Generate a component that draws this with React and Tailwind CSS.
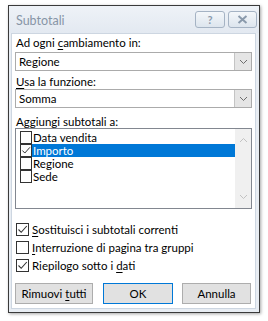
import React from "react";

const font = { fontFamily: 'Lato, "Noto Sans", sans-serif' };

function Chevron({ up = false, color = "#606060" }) {
  return (
    <svg width="9" height="6" viewBox="0 0 9 6" className="block">
      <path
        d={up ? "M1 5 L4.5 1.5 L8 5" : "M1 1 L4.5 4.5 L8 1"}
        fill="none"
        stroke={color}
        strokeWidth="1"
      />
    </svg>
  );
}

function Check({ color = "#333" }) {
  return (
    <svg width="11" height="11" viewBox="0 0 11 11" className="block">
      <path d="M1.5 5.5 L4.2 8.3 L9.8 2" fill="none" stroke={color} strokeWidth="1.1" />
    </svg>
  );
}

function Box({ checked, size = "w-[13px] h-[13px]" }) {
  return (
    <div className={`${size} border border-[#333333] bg-white flex items-center justify-center shrink-0`}>
      {checked && <Check />}
    </div>
  );
}

function Combo({ value }) {
  return (
    <div className="h-[19px] w-[237px] border border-[#ababab] bg-white flex">
      <div className="flex-1 pl-[3px] leading-[17px] text-black">{value}</div>
      <div className="w-[17px] h-full bg-[#e5e5e5] border-l border-[#c4c4c4] flex items-center justify-center">
        <Chevron color="#6d6d6d" />
      </div>
    </div>
  );
}

function U({ children }) {
  return <span className="underline underline-offset-[2px]">{children}</span>;
}

export default function App() {
  const items = [
    { t: "Data vendita", c: false },
    { t: "Importo", c: true, sel: true },
    { t: "Regione", c: false },
    { t: "Sede", c: false },
  ];
  return (
    <div className="w-[268px] h-[321px] bg-white pt-[5px] pl-[8px]" style={font}>
      <div className="w-[252px] h-[308px] border border-[#3a3a3a] bg-[#e8edf3] flex flex-col shadow-[1px_1px_3px_rgba(0,0,0,0.35)]">
        {/* title bar */}
        <div className="h-[27px] flex items-start pl-[7px] pr-[2px] bg-gradient-to-b from-[#eef2f7] to-[#e3e9f1]">
          <div className="text-[12.5px] leading-[16px] mt-[7px] text-[#8795a6]">Subtotali</div>
          <div className="ml-auto flex gap-[3px] mt-[5px]">
            <div className="w-[30px] h-[17px] rounded-[3px] border border-[#a5b3c4] bg-gradient-to-b from-[#f4f7fa] to-[#dde5ee] flex items-center justify-center text-[11px] font-bold leading-none text-[#8a9aac]">
              ?
            </div>
            <div className="w-[29px] h-[17px] rounded-[3px] border border-[#a5b3c4] bg-gradient-to-b from-[#f4f7fa] to-[#dde5ee] flex items-center justify-center">
              <svg width="11" height="9" viewBox="0 0 11 9">
                <path d="M1.5 1 L9.5 8 M9.5 1 L1.5 8" stroke="#8a9aac" strokeWidth="2" fill="none" />
              </svg>
            </div>
          </div>
        </div>
        {/* content */}
        <div className="flex-1 ml-[2px] mb-[3px] mr-[3px] bg-white border border-[#cdd6e1] text-black text-[11.5px] leading-[16px] pl-[3px] flex flex-col">
          <div className="mt-[1px] pl-[1px]">
            Ad ogni <U>c</U>ambiamento in:
          </div>
          <div className="mt-[1px]">
            <Combo value="Regione" />
          </div>
          <div className="mt-[4px] pl-[1px] leading-[14px]">
            <U>U</U>sa la funzione:
          </div>
          <div>
            <Combo value="Somma" />
          </div>
          <div className="mt-[8px] pl-[1px] leading-[12px]">
            <U>A</U>ggiungi subtotali a:
          </div>
          <div className="w-[237px] h-[81px] border border-[#828790] bg-white flex">
            <div className="flex-1 pt-[2px] pl-[4px]">
              {items.map((it) => (
                <div key={it.t} className="h-[13px] flex items-center">
                  <Box checked={it.c} size="w-[12px] h-[13px]" />
                  <div
                    className={`flex-1 h-[13px] leading-[13px] pl-[1px] ${
                      it.sel ? "bg-[#0078d7] text-white" : ""
                    }`}
                  >
                    {it.t}
                  </div>
                </div>
              ))}
            </div>
            <div className="w-[16px] bg-[#f0f0f0] flex flex-col items-center justify-between py-[8px]">
              <Chevron up color="#c2c2c2" />
              <Chevron color="#c2c2c2" />
            </div>
          </div>
          <div className="mt-[14px] flex flex-col gap-[5px]">
            <div className="flex items-center h-[13px] gap-[3px] pl-[1px]">
              <Box checked />
              <span>
                <U>S</U>ostituisci i subtotali correnti
              </span>
            </div>
            <div className="flex items-center h-[13px] gap-[3px] pl-[1px]">
              <Box checked={false} />
              <span>
                <U>I</U>nterruzione di pagina tra gruppi
              </span>
            </div>
            <div className="flex items-center h-[13px] gap-[3px] pl-[1px]">
              <Box checked />
              <span>
                Riepilogo sotto i <U>d</U>ati
              </span>
            </div>
          </div>
          <div className="mt-[11px] flex">
            <div className="w-[78px] h-[21px] border border-[#adadad] bg-[#e1e1e1] flex items-center justify-center">
              <span>
                Rimuovi <U>t</U>utti
              </span>
            </div>
            <div className="ml-[10px] w-[70px] h-[21px] border border-[#0078d7] bg-[#e1e1e1] flex items-center justify-center">
              <span>OK</span>
            </div>
            <div className="ml-[9px] w-[69px] h-[21px] border border-[#adadad] bg-[#e1e1e1] flex items-center justify-center">
              <span>Annulla</span>
            </div>
          </div>
        </div>
      </div>
    </div>
  );
}
